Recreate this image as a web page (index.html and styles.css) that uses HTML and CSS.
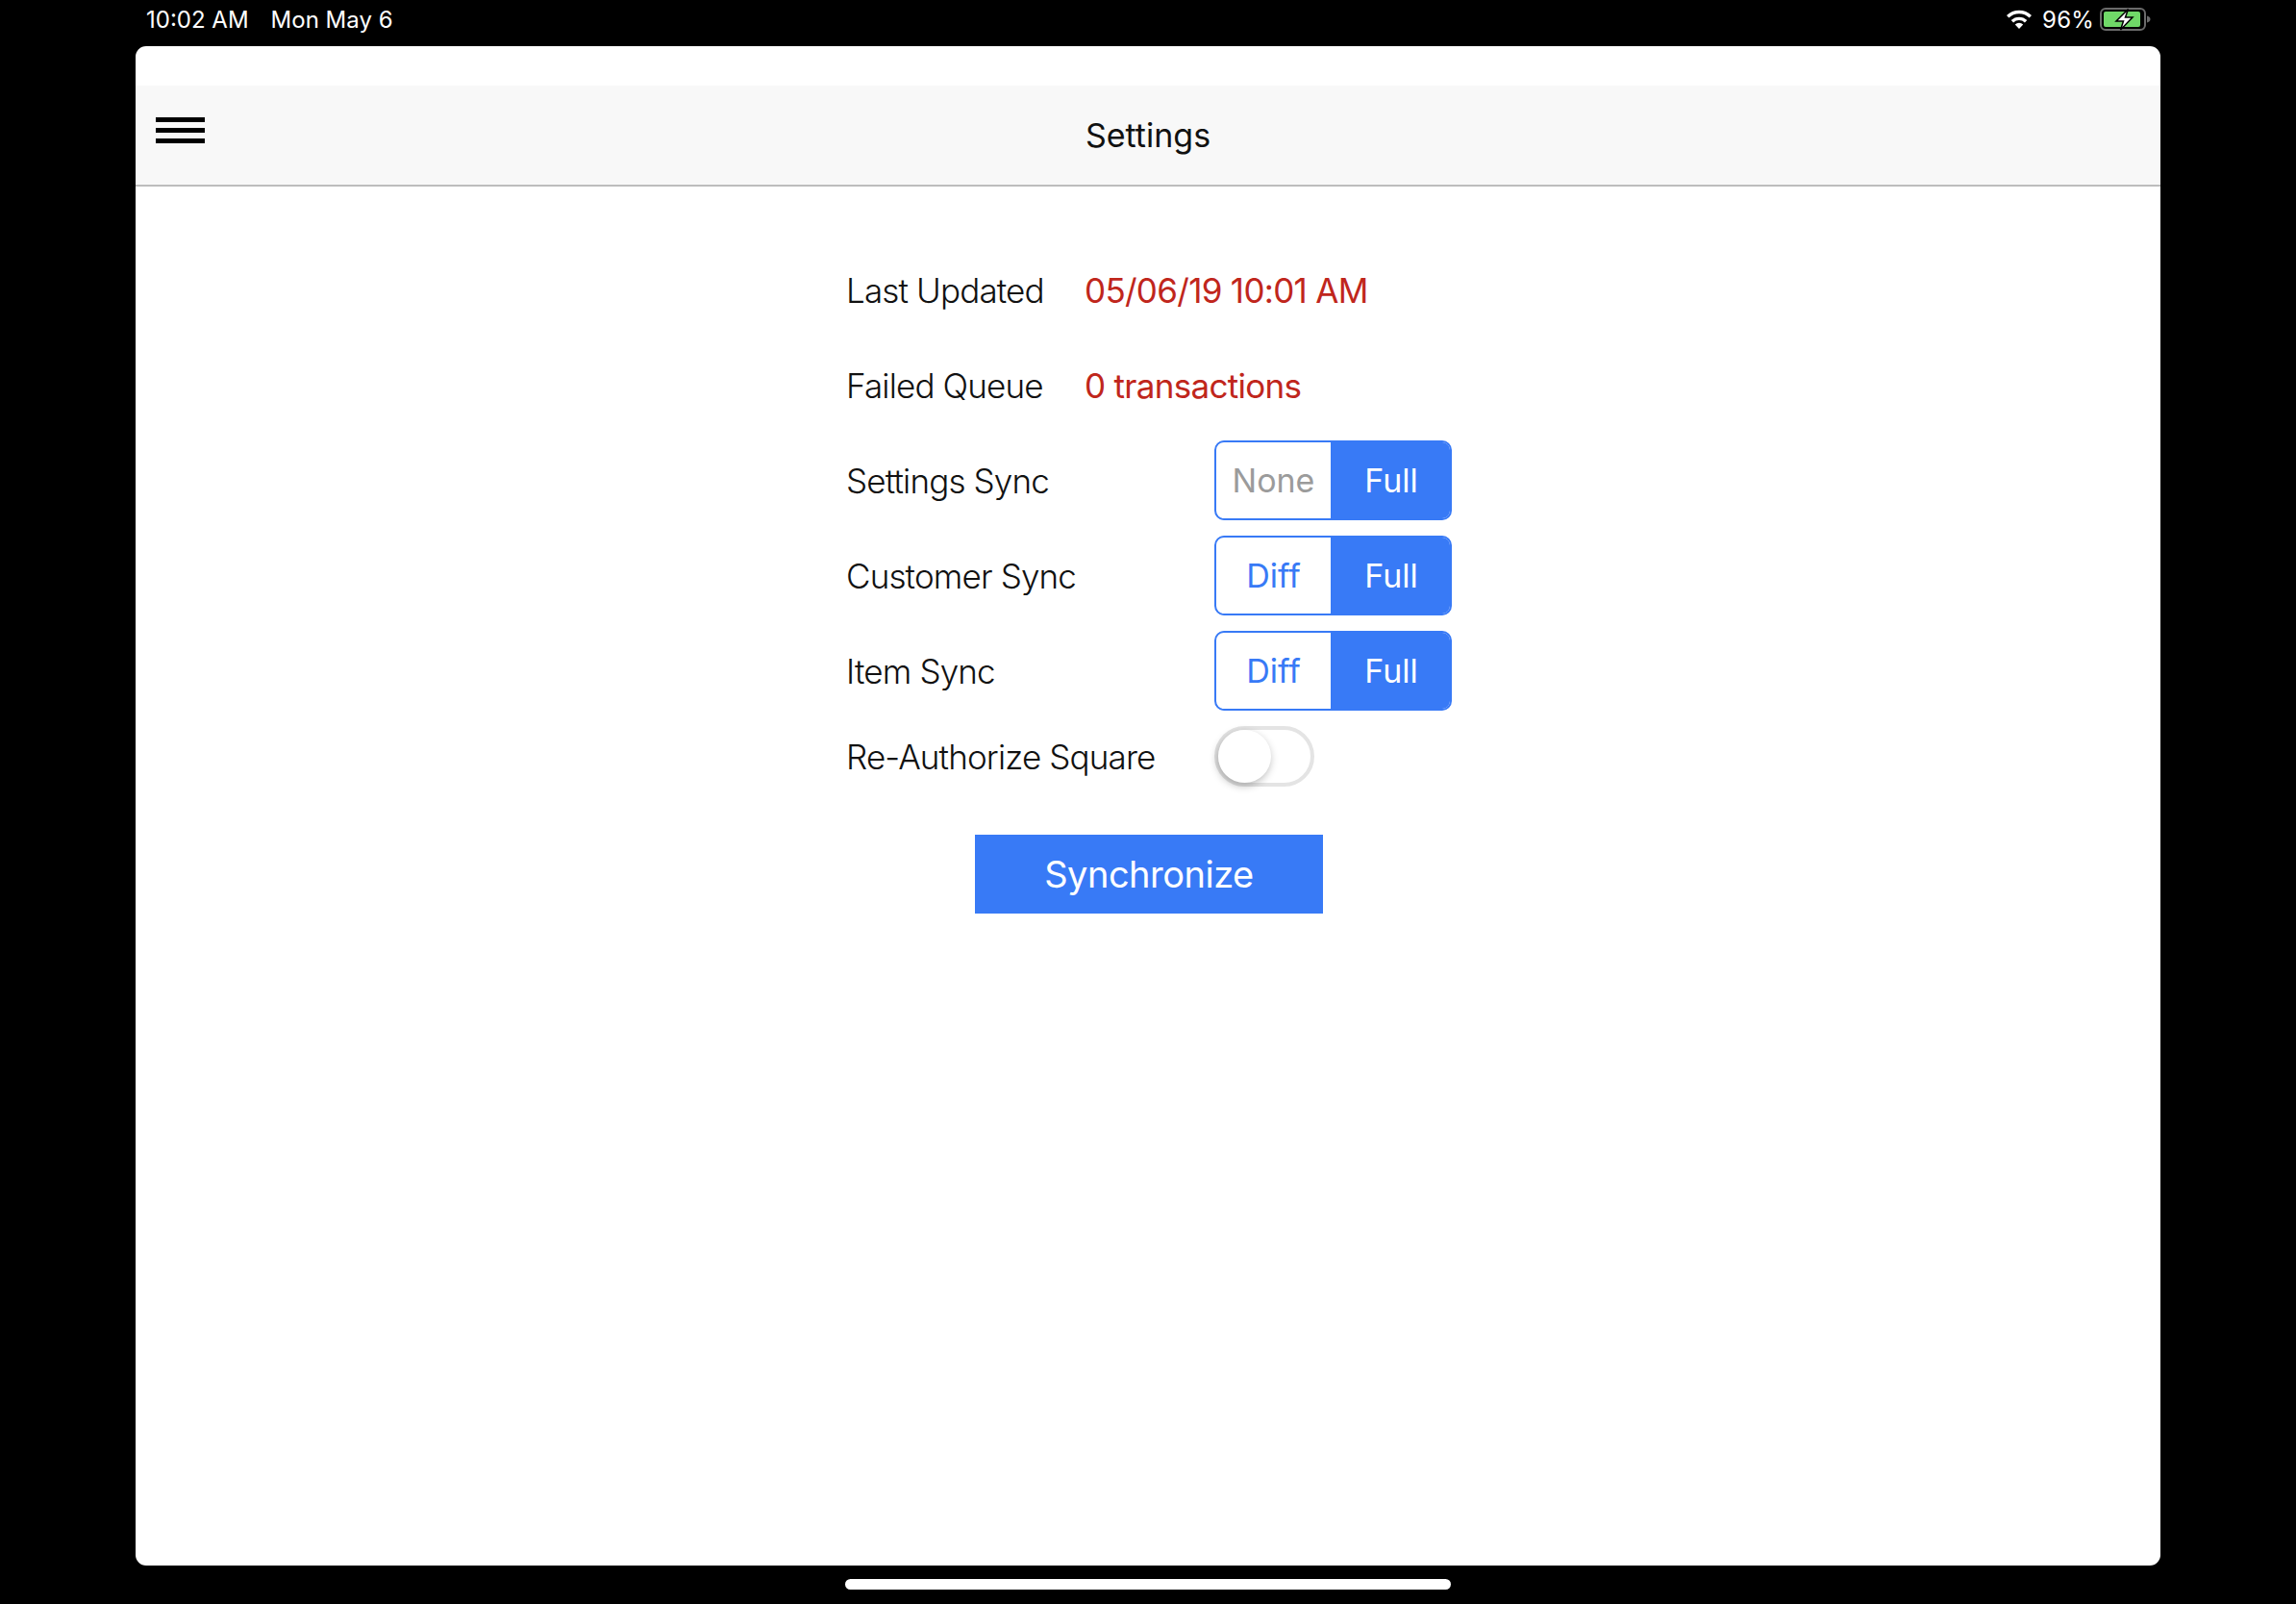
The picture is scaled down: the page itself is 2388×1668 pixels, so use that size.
FILE: index.html
```html
<!doctype html>
<html>
    <head>
        <meta charset="utf-8" />
        <title>Settings</title>
        <link rel="stylesheet" href="styles.css">
    </head>
    <body>
        <!-- Device status bar -->
        <div class="status-bar">
            <div class="status-left">
                <span>10:02 AM</span>
                <span>Mon May 6</span>
            </div>
            <div class="status-right">
                <svg class="wifi-icon" width="28" height="20" viewBox="0 0 28 20">
                    <path d="M14 20l-4.2-4.6a6 6 0 0 1 8.4 0z" fill="#fff" />
                    <path d="M6.9 12.3a10.2 10.2 0 0 1 14.2 0" fill="none" stroke="#fff" stroke-width="3.4" />
                    <path d="M2.2 7.2a17 17 0 0 1 23.6 0" fill="none" stroke="#fff" stroke-width="3.4" />
                </svg>
                <span class="battery-level">96%</span>
                <svg class="battery-icon" width="53" height="24" viewBox="0 0 53 24">
                    <rect x="1" y="1" width="46" height="22" rx="5" fill="none" stroke="#6b6b6b" stroke-width="2" />
                    <rect x="4" y="4" width="38" height="16" rx="2" fill="#70d968" />
                    <path d="M49 8.500c2 .6 3.500 1.800 3.500 3.500s-1.500 2.900-3.500 3.500z" fill="#6b6b6b" />
                    <path d="M29.500 1.500L17 14h7.500l-3 9L34 10h-7.500z" fill="#fff" stroke="#000" stroke-width="1.500" />
                </svg>
            </div>
        </div>

        <div class="app-window">
            <div class="nav-bar">
                <div class="menu-button">
                    <span></span>
                    <span></span>
                    <span></span>
                </div>
                <h1 class="nav-title">Settings</h1>
            </div>

            <form class="settings-form">
                <div class="form-row">
                    <label class="row-label">Last Updated</label>
                    <span class="row-value">05/06/19 10:01 AM</span>
                </div>
                <div class="form-row">
                    <label class="row-label">Failed Queue</label>
                    <span class="row-value">0 transactions</span>
                </div>
                <div class="form-row">
                    <label class="row-label row-label-wide">Settings Sync</label>
                    <div class="segmented">
                        <span class="segment segment-muted">None</span>
                        <span class="segment segment-active">Full</span>
                    </div>
                </div>
                <div class="form-row">
                    <label class="row-label row-label-wide">Customer Sync</label>
                    <div class="segmented">
                        <span class="segment">Diff</span>
                        <span class="segment segment-active">Full</span>
                    </div>
                </div>
                <div class="form-row">
                    <label class="row-label row-label-wide">Item Sync</label>
                    <div class="segmented">
                        <span class="segment">Diff</span>
                        <span class="segment segment-active">Full</span>
                    </div>
                </div>
                <div class="form-row form-row-toggle">
                    <label class="row-label row-label-wide">Re-Authorize Square</label>
                    <div class="toggle">
                        <div class="toggle-knob"></div>
                    </div>
                </div>
                <button type="button" class="sync-button">Synchronize</button>
            </form>
        </div>

        <div class="home-indicator"></div>
    </body>
</html>
```

FILE: styles.css
```css
* {
    box-sizing: border-box;
}

body {
    margin: 0;
    width: 2388px;
    height: 1668px;
    overflow: hidden;
    background: #000;
    font-family: "Inter", "Liberation Sans", sans-serif;
    display: flex;
    flex-direction: column;
}

.status-bar {
    height: 48px;
    padding: 0 151px 8px 152px;
    display: flex;
    justify-content: space-between;
    align-items: center;
    color: #fff;
    font-size: 24px;
}

.status-left {
    display: flex;
    gap: 23px;
}

.status-right {
    display: flex;
    align-items: center;
    gap: 10px;
}

.battery-level {
    letter-spacing: 0.2px;
}

.battery-icon {
    margin-left: -4px;
}

.app-window {
    height: 1580px;
    margin: 0 141px;
    padding-top: 41px;
    background: #fff;
    border-radius: 11px;
}

.nav-bar {
    position: relative;
    height: 105px;
    background: #f8f8f8;
    border-bottom: 2px solid #bdbdbd;
    display: flex;
    align-items: center;
    justify-content: center;
}

.menu-button {
    position: absolute;
    left: 21px;
    top: 33px;
    width: 51px;
    display: flex;
    flex-direction: column;
    gap: 6px;
}

.menu-button span {
    height: 5px;
    background: #000;
}

.nav-title {
    margin: 0;
    font-size: 34px;
    font-weight: 400;
    color: #111;
}

.settings-form {
    width: 629px;
    margin-left: 740px;
    padding-top: 66px;
    display: flex;
    flex-direction: column;
    gap: 16px;
}

.form-row {
    height: 83px;
    display: flex;
    align-items: center;
}

.form-row-toggle {
    height: 63px;
}

.row-label {
    width: 247px;
    margin-left: -1px;
    margin-right: 1px;
    font-size: 35px;
    font-weight: 300;
    letter-spacing: -0.85px;
    color: #111;
}

.row-label-wide {
    width: 382px;
}

.row-value {
    font-size: 35px;
    font-weight: 400;
    letter-spacing: -0.7px;
    color: #c0261c;
}

.segmented {
    width: 247px;
    height: 83px;
    display: flex;
    border: 2px solid #387af6;
    border-radius: 10px;
    overflow: hidden;
}

.segment {
    flex: 1;
    display: flex;
    align-items: center;
    justify-content: center;
    font-size: 34px;
    color: #387af6;
}

.segment-muted {
    color: #9b9b9b;
}

.segment-active {
    flex: 0 0 124px;
    padding-left: 2px;
    background: #387af6;
    color: #fff;
}

.toggle {
    width: 104px;
    height: 63px;
    padding: 4px;
    border: 4px solid #e4e4e4;
    border-radius: 32px;
    display: flex;
    align-items: center;
    position: relative;
}

.toggle-knob {
    position: absolute;
    left: 0;
    top: 0;
    width: 55px;
    height: 55px;
    border-radius: 50%;
    background: #fff;
    box-shadow: -1px 3px 9px rgba(0, 0, 0, 0.28);
}

.sync-button {
    width: 362px;
    height: 82px;
    margin: 34px 0 0 133px;
    border: none;
    background: #387af6;
    color: #fff;
    font-family: inherit;
    font-size: 38px;
    letter-spacing: -0.5px;
}

.home-indicator {
    width: 630px;
    height: 11px;
    margin: 14px auto 0;
    background: #fff;
    border-radius: 6px;
}
```
